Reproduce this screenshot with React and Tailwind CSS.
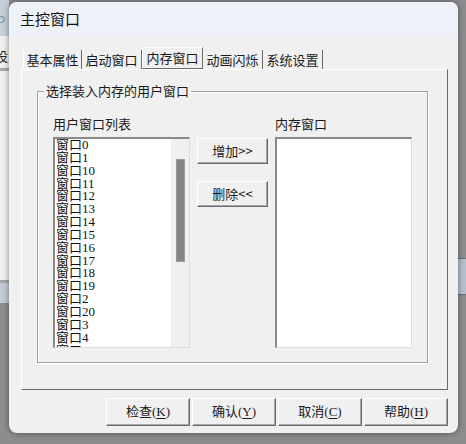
import React from "react";

const items = ["0","1","10","11","12","13","14","15","16","17","18","19","2","20","3","4","5","6"];

const CJK = { fontFamily: '"Noto Sans CJK SC", "Liberation Sans", sans-serif' };

function Btn({ children, className = "" }) {
  return (
    <div className={"flex items-center justify-center bg-[#f0f0f0] border border-t-white border-l-white border-r-[#6a6a6a] border-b-[#6a6a6a] shadow-[inset_-1px_-1px_0_#a8a8a8] text-[13px] text-[#1a1a1a] " + className}>
      {children}
    </div>
  );
}

function BottomBtn({ label, k }) {
  return (
    <Btn className="w-[84px] h-[28px] font-['Liberation_Serif','Noto_Sans_CJK_SC',serif]">
      <span>{label}(<span className="underline underline-offset-[2px]">{k}</span>)</span>
    </Btn>
  );
}

export default function App() {
  return (
    <div className="relative w-[466px] h-[444px] overflow-hidden bg-[#8d8d8d] font-['Noto_Sans_CJK_SC','Liberation_Sans',sans-serif]">
      {/* background app fragments on the left */}
      <div className="absolute left-0 top-0 w-[9px] h-[303px] flex flex-col">
        <div className="h-[36px] bg-[#c7d0da] relative overflow-hidden">
          <span className="absolute left-[-4px] top-[10px] text-[15px] text-[#8a96a6]">P</span>
        </div>
        <div className="h-[32px] bg-[#f0f0f0] relative overflow-hidden">
          <span className="absolute left-[-5px] top-[10px] text-[13px] text-[#222]">设</span>
        </div>
        <div className="h-[3px] bg-[#a9a9a9]" />
        <div className="flex-1 bg-[#f0f0f0] border-b-[3px] border-[#a8a8a8]" />
        <div className="h-[20px] bg-[#c2cad3]" />
      </div>
      {/* background fragment on the right */}
      <div className="absolute right-0 top-[258px] w-[8px] h-[37px] bg-[#b4c0ce] border-y border-[#707070]" />

      {/* dialog */}
      <div className="absolute left-[9px] top-[2px] w-[449px] h-[431px] rounded-[8px] overflow-hidden bg-[#f0f0f0] shadow-[0_0_6px_rgba(0,0,0,0.45)] flex flex-col">
        <div className="h-[34px] shrink-0 bg-[#eef2f8] flex items-center pl-[11px] text-[15px] text-[#111]">
          主控窗口
        </div>

        <div className="flex flex-col pl-[12px] pr-[10px]">
          {/* tabs */}
          <div className="mt-[11px] h-[22px] flex items-end pl-[2px] text-[13px] text-[#1a1a1a]">
            <div className="h-[19px] w-[59px] flex items-center justify-center border-r border-[#6a6a6a] border-l border-l-white">基本属性</div>
            <div className="h-[19px] w-[60px] flex items-center justify-center border-r border-[#6a6a6a]">启动窗口</div>
            <div className="h-[22px] w-[61px] flex items-center justify-center border border-t-white border-l-white border-r-[#6a6a6a] border-b-[#6a6a6a] bg-[#f0f0f0]">内存窗口</div>
            <div className="h-[19px] w-[60px] flex items-center justify-center border-r border-[#6a6a6a]">动画闪烁</div>
            <div className="h-[19px] w-[60px] flex items-center justify-center border-r border-[#6a6a6a]">系统设置</div>
          </div>

          {/* tab panel */}
          <div className="h-[321px] border border-t-white border-l-white border-r-[#6a6a6a] border-b-[#6a6a6a] pt-[21px] pl-[15px] pr-[19px]">
            <div className="relative h-[272px] border border-[#a0a0a0] shadow-[inset_1px_1px_0_#fff,1px_1px_0_#fff] pt-[23px] pl-[15px] pr-[15px]">
              <span className="absolute left-[6px] top-[-10px] px-[2px] bg-[#f0f0f0] text-[13px] leading-[18px] text-[#1a1a1a]">
                选择装入内存的用户窗口
              </span>
              <div className="flex gap-[7px]">
                {/* left list */}
                <div className="flex flex-col w-[137px]">
                  <div className="h-[22px] text-[13px] leading-[18px] text-[#1a1a1a]">用户窗口列表</div>
                  <div className="h-[211px] flex bg-white border-t-2 border-l-2 border-[#8a8a8a] border-r border-b border-r-[#dcdcdc] border-b-[#dcdcdc] overflow-hidden">
                    <div className="flex-1 flex flex-col pl-[1px] pt-[0px] font-['Liberation_Serif','Noto_Sans_CJK_SC',serif] text-[13px] leading-[12.85px] text-[#111] overflow-hidden">
                      {items.map((n) => (
                        <div key={n} className="h-[12.85px] whitespace-nowrap">窗口{n}</div>
                      ))}
                    </div>
                    <div className="w-[18px] bg-[#f0f0f0] flex justify-center pt-[20px]">
                      <div className="w-[9px] h-[103px] bg-[#858585] border border-[#9a9a9a]" />
                    </div>
                  </div>
                </div>
                {/* buttons */}
                <div className="flex flex-col w-[71px] pt-[23px] gap-[17px]">
                  <Btn className="h-[26px]">增加&gt;&gt;</Btn>
                  <Btn className="h-[26px]">删除&lt;&lt;</Btn>
                </div>
                {/* right list */}
                <div className="flex flex-col w-[137px]">
                  <div className="h-[22px] text-[13px] leading-[18px] text-[#1a1a1a]">内存窗口</div>
                  <div className="h-[211px] bg-white border-t-2 border-l-2 border-[#8a8a8a] border-r border-b border-r-[#dcdcdc] border-b-[#dcdcdc]" />
                </div>
              </div>
            </div>
          </div>

          {/* bottom buttons */}
          <div className="mt-[8px] flex justify-end gap-[2px]">
            <BottomBtn label="检查" k="K" />
            <BottomBtn label="确认" k="Y" />
            <BottomBtn label="取消" k="C" />
            <BottomBtn label="帮助" k="H" />
          </div>
        </div>
      </div>
    </div>
  );
}
